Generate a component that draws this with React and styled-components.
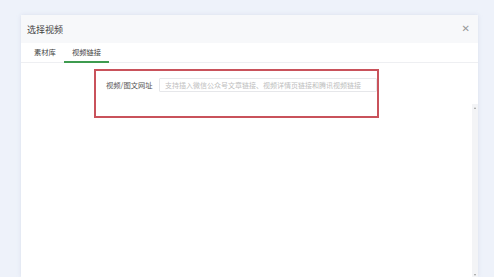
import React from 'react'
import styled, { createGlobalStyle } from 'styled-components'

const GlobalStyle = createGlobalStyle`
  html, body {
    margin: 0;
    padding: 0;
    background: #eef2fa;
    font-family: "Noto Sans CJK SC", "Noto Sans", sans-serif;
  }
`

const Page = styled.div`
  height: 100vh;
  overflow: hidden;
  padding: 15px 16px 0 21px;
  box-sizing: border-box;
`

const Dialog = styled.div`
  width: 457px;
  height: 100%;
  background: #fff;
  display: flex;
  flex-direction: column;
  box-shadow: 0 0 4px rgba(180, 190, 215, 0.35);
`

const Header = styled.div`
  height: 28px;
  flex-shrink: 0;
  background: #f7f8fa;
  display: flex;
  align-items: center;
  justify-content: space-between;
  padding: 0 8px 0 6px;
`

const Title = styled.span`
  font-size: 9px;
  color: #444;
`

const Close = styled.span`
  font-size: 10px;
  line-height: 1;
  color: #999;
  font-family: "DejaVu Sans", sans-serif;
`

const Tabs = styled.div`
  height: 19px;
  flex-shrink: 0;
  display: flex;
  padding-left: 5px;
  border-bottom: 1px solid #eeeff2;
`

const Tab = styled.div`
  padding: 0 8px;
  font-size: 7.3px;
  color: #444;
  display: flex;
  align-items: center;
  box-sizing: border-box;
  border-bottom: 2px solid ${p => (p.active ? '#3e9b4f' : 'transparent')};
  margin-bottom: -1px;
`

const Body = styled.div`
  flex: 1;
  display: flex;
  flex-direction: column;
`

const Marked = styled.div`
  margin: 6px 0 0 73px;
  width: 285px;
  height: 49px;
  box-sizing: border-box;
  border: 2px solid #c9525b;
  padding: 7px 0 0 10px;
`

const FormRow = styled.div`
  display: flex;
  align-items: center;
  height: 14px;
`

const Label = styled.label`
  width: 53px;
  flex-shrink: 0;
  font-size: 7.3px;
  color: #555;
  white-space: nowrap;
`

const Input = styled.input`
  flex: 1;
  min-width: 0;
  height: 14px;
  box-sizing: border-box;
  border: 1px solid #e6e7ea;
  border-radius: 1px;
  padding: 0 5px;
  font-family: inherit;
  font-size: 7px;
  outline: none;
  &::placeholder {
    color: #c0c0c0;
  }
`

const Scroller = styled.div`
  flex: 1;
  display: flex;
  justify-content: flex-end;
  margin-top: -14px;
`

const Track = styled.div`
  width: 6px;
  background: #f3f4f6;
  display: flex;
  flex-direction: column;
  justify-content: space-between;
  align-items: center;
  padding: 3px 0 1px;
`

const Arrow = styled.span`
  width: 0;
  height: 0;
  border-left: 1.5px solid transparent;
  border-right: 1.5px solid transparent;
  ${p => (p.down ? 'border-top: 2px solid #999;' : 'border-bottom: 2px solid #999;')}
`

export default function App() {
  return (
    <>
      <GlobalStyle />
      <Page>
        <Dialog>
          <Header>
            <Title>选择视频</Title>
            <Close>✕</Close>
          </Header>
          <Tabs>
            <Tab>素材库</Tab>
            <Tab active>视频链接</Tab>
          </Tabs>
          <Body>
            <Marked>
              <FormRow>
                <Label>视频/图文网址</Label>
                <Input placeholder="支持插入微信公众号文章链接、视频详情页链接和腾讯视频链接" />
              </FormRow>
            </Marked>
            <Scroller>
              <Track>
                <Arrow />
                <Arrow down />
              </Track>
            </Scroller>
          </Body>
        </Dialog>
      </Page>
    </>
  )
}
